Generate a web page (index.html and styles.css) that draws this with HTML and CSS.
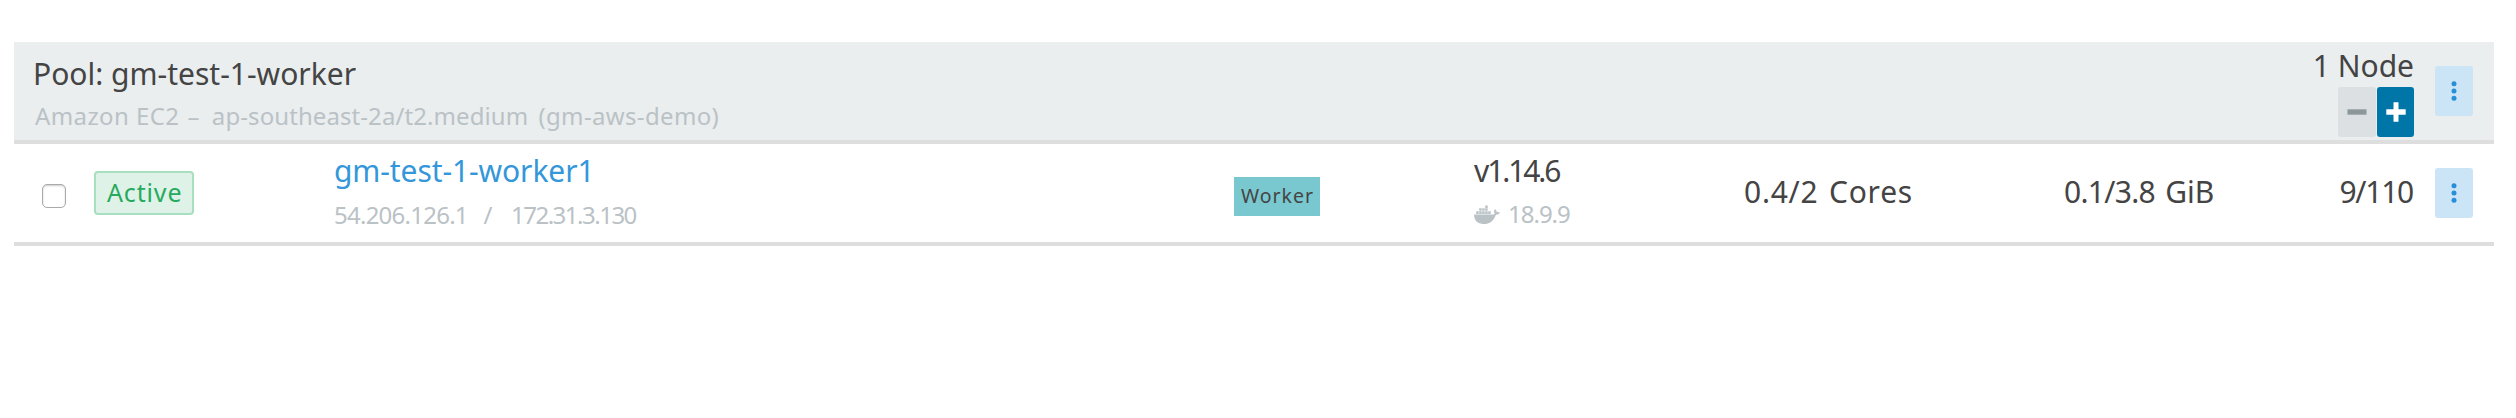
FILE: index.html
```html
<!DOCTYPE html>
<html lang="en">
<head>
<meta charset="utf-8">
<title>Node pools</title>
<link rel="stylesheet" href="styles.css">
</head>
<body>
<main class="pools">
  <header class="row pool">
    <div class="pool-info">
      <div class="pool-name">Pool: gm-test-1-worker</div>
      <div class="pool-detail"><span class="provider">Amazon EC2</span> <span class="dash">–</span> <span class="location">ap-southeast-2a/t2.medium</span> <span class="credential">(gm-aws-demo)</span></div>
    </div>
    <div class="scale">
      <div class="count">1 Node</div>
      <div class="buttons">
        <button class="btn minus" aria-label="Remove node"><svg width="20" height="20" viewBox="0 0 20 20"><path d="M0.500 7.300h19v5.400h-19z"/></svg></button>
        <button class="btn plus" aria-label="Add node"><svg width="20" height="20" viewBox="0 0 20 20"><path d="M7.500 0.300h5v7h7.200v5.400h-7.200v7h-5v-7h-7.200v-5.400h7.200z"/></svg></button>
      </div>
    </div>
    <button class="btn menu" aria-label="Pool actions"><svg width="6" height="20" viewBox="0 0 6 20"><circle cx="3" cy="2.700" r="2.500"/><circle cx="3" cy="10" r="2.500"/><circle cx="3" cy="17.300" r="2.500"/></svg></button>
  </header>
  <section class="row node">
    <div class="select"><input class="check" type="checkbox" aria-label="Select node"></div>
    <div class="state"><span class="badge">Active</span></div>
    <div class="name">
      <a class="link">gm-test-1-worker1</a>
      <div class="addresses"><span class="external">54.206.126.1</span><span class="slash">/</span><span class="internal">172.31.3.130</span></div>
    </div>
    <div class="role"><span class="tag">Worker</span></div>
    <div class="version">
      <div class="kube">v1.14.6</div>
      <div class="docker">
        <svg class="whale" width="26" height="20" viewBox="0 0 26 20"><path d="M0 9.500h18.500c1.300 0 2-.4 2.300-1-1.100-1.400-1-3 .2-4.300 1.200.8 1.700 1.700 1.700 2.800 1.200-.2 2.400 0 3.200.5-.6 1.500-2 2.200-4 2.200-2 6-6 9.300-12.400 9.300C3.500 19 .2 15.500 0 9.500z"/><path d="M2.200 6.300h2.500v2.600H2.200zM5.200 6.300h2.500v2.600H5.200zM8.200 6.300h2.500v2.600H8.200zM11.200 6.300h2.500v2.600h-2.500zM14.200 6.300h2.500v2.600h-2.500zM5.200 3.300h2.500v2.500H5.200zM8.200 3.300h2.500v2.500H8.200zM11.200 3.300h2.500v2.500h-2.500zM11.200.5h2.500v2.400h-2.500z"/></svg>
        <span class="engine">18.9.9</span>
      </div>
    </div>
    <div class="metric cores">0.4/2 Cores</div>
    <div class="metric memory"><span class="usage">0.1/3.8</span> GiB</div>
    <div class="metric pods">9/110</div>
    <button class="btn menu" aria-label="Node actions"><svg width="6" height="20" viewBox="0 0 6 20"><circle cx="3" cy="2.700" r="2.500"/><circle cx="3" cy="10" r="2.500"/><circle cx="3" cy="17.300" r="2.500"/></svg></button>
  </section>
</main>
</body>
</html>
```
FILE: styles.css
```css
* { box-sizing: border-box; }
body {
  margin: 0;
  background: #fff;
  color: #444;
  font-family: "Noto Sans", sans-serif;
  font-size: 30px;
  line-height: 40px;
  white-space: nowrap;
}
.pools { padding: 42px 22px 0 14px; }
.row {
  display: flex;
  height: 102px;
  border-bottom: 4px solid #dededf;
  padding-right: 21px;
}
.pool { background: #eaeeef; }
.pool-info { flex: 1; padding: 12px 0 0 19px; }
.pool-detail {
  margin-top: 6px;
  padding-left: 2px;
  font-size: 24px;
  line-height: 32px;
  color: #bac2c6;
}
.provider { letter-spacing: 0.4px; }
.dash { margin: 0 6px 0 2px; }
.location { margin-right: 4px; letter-spacing: 0.08px; }
.credential { letter-spacing: 0.35px; }
.scale { width: 120px; margin-right: 21px; padding-top: 4px; }
.count { text-align: right; }
.buttons { display: flex; justify-content: flex-end; gap: 1px; margin-top: 1px; }
.btn {
  display: flex;
  align-items: center;
  justify-content: center;
  width: 38px;
  height: 50px;
  padding: 0;
  border: 0;
  border-radius: 3px;
}
.minus { background: #dce0e3; fill: #8c979c; }
.plus { width: 37px; background: #0075a8; fill: #fff; }
.menu { margin-top: 24px; background: #cbe4f6; fill: #268fd8; }
.menu svg { margin-right: 1px; }
.select { width: 80px; padding: 40px 0 0 28px; }
.check {
  display: block;
  appearance: none;
  width: 24px;
  height: 24px;
  margin: 0;
  border: 1px solid #aaa;
  border-radius: 5px;
  background: #fff;
  box-shadow: inset 0 1px 2px #ccc;
}
.state { width: 240px; padding-top: 27px; }
.badge {
  display: block;
  width: 100px;
  height: 44px;
  padding-left: 11px;
  border: 2px solid #a8dfc0;
  border-radius: 4px;
  background: #dff2e8;
  color: #27aa5e;
  font-size: 25px;
  line-height: 39px;
  letter-spacing: 0.85px;
}
.name { width: 900px; padding-top: 7px; }
.link { display: block; color: #3497da; letter-spacing: -0.1px; }
.addresses, .docker {
  display: flex;
  align-items: center;
  font-size: 24px;
  line-height: 32px;
  color: #bac2c6;
}
.addresses { margin-top: 8px; }
.external { width: 131px; letter-spacing: -0.75px; }
.slash { width: 46px; text-align: center; }
.internal { letter-spacing: -1.5px; }
.role { width: 240px; padding-top: 33px; }
.tag {
  display: block;
  width: 86px;
  height: 39px;
  padding-left: 7px;
  background: #79c8cf;
  font-size: 19.5px;
  line-height: 38px;
  letter-spacing: 1px;
}
.version { width: 270px; padding-top: 7px; }
.kube { letter-spacing: -2.1px; }
.docker { margin-top: 7px; gap: 8px; fill: #bac2c6; }
.whale { margin-top: 2px; }
.engine { letter-spacing: -1px; }
.metric { padding-top: 28px; }
.cores { width: 320px; letter-spacing: 0.75px; word-spacing: 2px; }
.memory { width: 240px; word-spacing: 2.500px; }
.usage { letter-spacing: -0.7px; }
.pods { flex: 1; margin-right: 22px; text-align: right; letter-spacing: -1.25px; }
```
